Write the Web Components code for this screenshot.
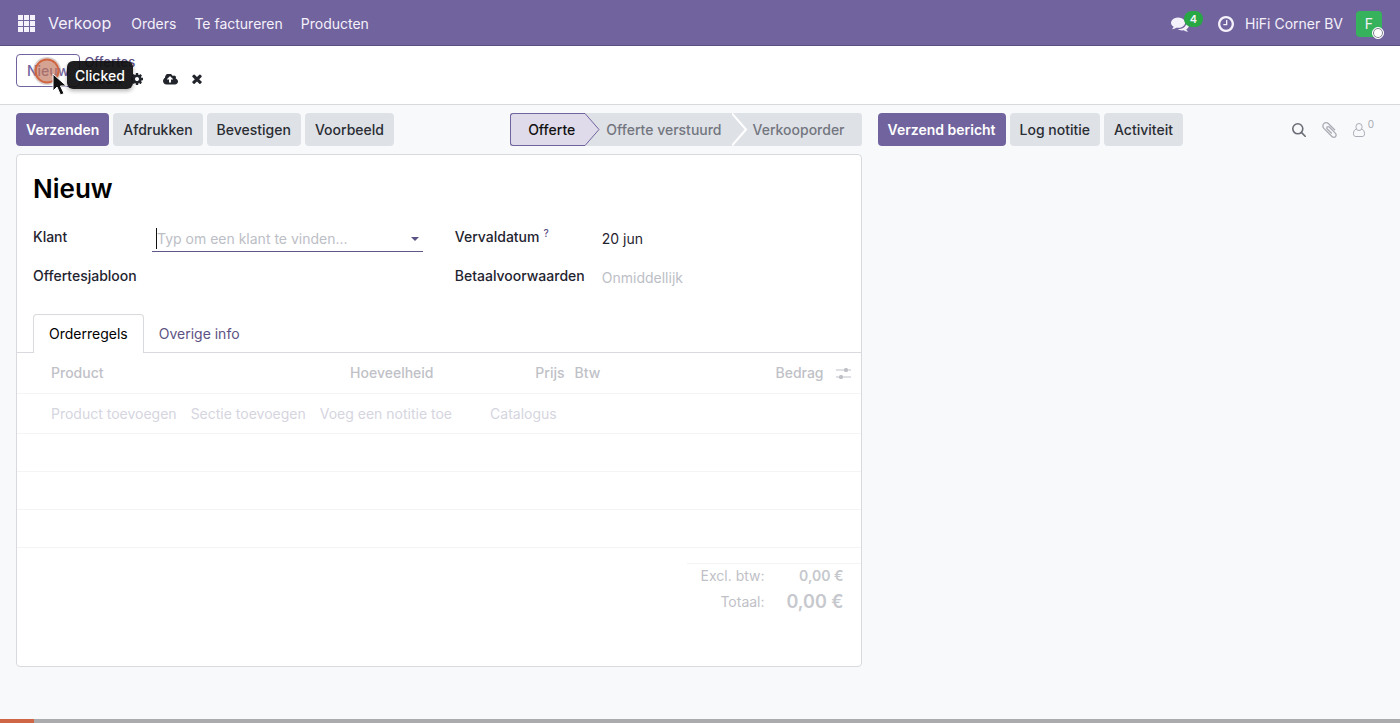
<!DOCTYPE html>
<html lang="nl">
<head>
<meta charset="utf-8">
<meta name="viewport" content="width=device-width, initial-scale=1">
<title>Verkoop - Nieuw</title>
<style>
  html, body { margin: 0; min-height: 100vh; }
  body {
    --brand: #71639e;
    --line: #d8dadd;
    --grey: #dee1e6;
    --muted: #b9bbc3;
    background: #f8f9fb;
    color: #1f2430;
    font: 14px/21px Inter, "Liberation Sans", sans-serif;
  }
</style>
</head>
<body>
<sales-app></sales-app>

<script>
const base = `
  *, *::before, *::after { box-sizing: border-box; }
  button, input { font: inherit; color: inherit; border: 0; background: none; padding: 0; margin: 0; }
  button { cursor: pointer; white-space: nowrap; }
  a { color: inherit; text-decoration: none; white-space: nowrap; }
  svg { display: block; }
`;

function define(name, html, setup) {
  const template = document.createElement('template');
  template.innerHTML = html.replace('<style>', '<style>' + base);
  customElements.define(name, class extends HTMLElement {
    constructor() {
      super();
      this.attachShadow({ mode: 'open' }).append(template.content.cloneNode(true));
    }
    connectedCallback() { if (setup) setup(this, this.shadowRoot); }
  });
}

const icons = {
  apps: ['0 0 17 17', '<path d="M0 0h5v5H0zM6 0h5v5H6zM12 0h5v5h-5zM0 6h5v5H0zM6 6h5v5H6zM12 6h5v5h-5zM0 12h5v5H0zM6 12h5v5H6zM12 12h5v5h-5z"/>'],
  comments: ['0 128 1792 1536', '<path d="M1408 768q0 139-94 257t-256.500 186.500-353.500 68.500q-86 0-176-16-124 88-278 128-36 9-86 16h-3q-11 0-20.500-8t-11.500-21q-1-3-1-6.500t.5-6.500 2-6l2.500-5 3.500-5.500 4-5 4.500-5 4-4.500q5-6 23-25t26-29.500 22.500-29 25-38.500 20.500-44q-124-72-195-177t-71-224q0-139 94-257t256.500-186.500 353.500-68.500 353.500 68.500 256.500 186.500 94 257zm384 256q0 120-71 224.500t-195 176.500q10 24 20.500 44t25 38.500 22.500 29 26 29.500 23 25q1 1 4 4.500t4.500 5 4 5 3.500 5.500l2.500 5 2 6 .5 6.500-1 6.500q-3 14-13 22t-22 7q-50-7-86-16-154-40-278-128-90 16-176 16-271 0-472-132 58 4 88 4 161 0 309-45t264-129q125-92 192-212t67-254q0-77-23-152 129 71 204 178t75 230z"/>'],
  clock: ['128 128 1536 1536', '<path d="M1024 544v448q0 14-9 23t-23 9h-320q-14 0-23-9t-9-23v-64q0-14 9-23t23-9h224v-352q0-14 9-23t23-9h64q14 0 23 9t9 23zm416 352q0-148-73-273t-198-198-273-73-273 73-198 198-73 273 73 273 198 198 273 73 273-73 198-198 73-273zm224 0q0 209-103 385.500t-279.500 279.500-385.500 103-385.500-103-279.500-279.500-103-385.500 103-385.500 279.500-279.500 385.500-103 385.500 103 279.500 279.500 103 385.500z"/>'],
  cog: ['128 128 1536 1536', '<path d="M1152 896q0-106-75-181t-181-75-181 75-75 181 75 181 181 75 181-75 75-181zm512-109v222q0 12-8 23t-20 13l-185 28q-19 54-39 91 35 50 107 138 10 12 10 25t-9 23q-27 37-99 108t-94 71q-12 0-26-9l-138-108q-44 23-91 38-16 136-29 186-7 28-36 28h-222q-14 0-24.500-8.500t-11.500-21.500l-28-184q-49-16-90-37l-141 107q-10 9-25 9-14 0-25-11-126-114-165-168-7-10-7-23 0-12 8-23 15-21 51-66.500t54-70.500q-27-50-41-99l-183-27q-13-2-21-12.500t-8-23.500v-222q0-12 8-23t19-13l186-28q14-46 39-92-40-57-107-138-10-12-10-24 0-10 9-23 26-36 98.500-107.500t94.500-71.500q13 0 26 10l138 107q44-23 91-38 16-136 29-186 7-28 36-28h222q14 0 24.500 8.500t11.500 21.500l28 184q49 16 90 37l142-107q9-9 24-9 13 0 25 10 129 119 165 170 7 8 7 22 0 12-8 23-15 21-51 66.500t-54 70.500q26 50 41 98l183 28q13 2 21 12.500t8 23.500z"/>'],
  cloud: ['-64 256 1920 1280', '<path d="M1216 864q0-14-9-23l-352-352q-9-9-23-9t-23 9l-351 351q-10 12-10 24 0 14 9 23t23 9h224v352q0 13 9.500 22.500t22.500 9.500h192q13 0 22.500-9.500t9.500-22.500v-352h224q13 0 22.500-9.500t9.500-22.500zm640 288q0 159-112.500 271.500t-271.500 112.500h-1088q-185 0-316.500-131.500t-131.500-316.500q0-130 70-240t188-165q-2-30-2-43 0-212 150-362t362-150q156 0 285.500 87t188.500 231q71-62 166-62 106 0 181 75t75 181q0 76-41 138 130 31 213.500 135.500t83.500 238.500z"/>'],
  close: ['302 302 1188 1252', '<path d="M1490 1322q0 40-28 68l-136 136q-28 28-68 28t-68-28l-294-294-294 294q-28 28-68 28t-68-28l-136-136q-28-28-28-68t28-68l294-294-294-294q-28-28-28-68t28-68l136-136q28-28 68-28t68 28l294 294 294-294q28-28 68-28t68 28l136 136q28 28 28 68t-28 68l-294 294 294 294q28 28 28 68z"/>'],
  clip: ['192 128 1408 1536', '<path d="M1596 1385q0 117-79 196t-196 79q-135 0-235-100l-777-776q-113-115-113-271 0-159 110-270t269-111q158 0 273 113l605 606q10 10 10 22 0 16-30.500 46.500t-46.500 30.500q-13 0-23-10l-606-607q-79-77-181-77-106 0-179 75t-73 181q0 105 76 181l776 777q63 63 145 63 64 0 106-42t42-106q0-82-63-145l-581-581q-26-24-60-24-29 0-48 19t-19 48q0 32 25 59l410 410q10 10 10 22 0 16-31 47t-47 31q-12 0-22-10l-410-410q-63-61-63-149 0-82 57-139t139-57q88 0 149 63l581 581q100 98 100 235z"/>'],
  search: ['0 0 14 14', '<g fill="none" stroke="currentColor" stroke-width="1.600" stroke-linecap="round"><circle cx="5.800" cy="5.800" r="5"/><path d="M9.600 9.600l3.600 3.600"/></g>'],
  user: ['0 0 12 14', '<g fill="none" stroke="currentColor"><rect x="3" y=".5" width="6" height="7" rx="3"/><path d="M3.300 6.200C1.500 6.600.5 8.200.5 10.800c0 1.800.9 2.700 2.300 2.700h6.400c1.400 0 2.300-.9 2.300-2.700 0-2.600-1-4.200-2.800-4.600"/></g>'],
  sliders: ['0 0 15 14', '<g><path d="M0 3.500h15v1H0zM0 10.500h15v1H0z"/><rect x="8" y="2" width="4" height="4" rx="1.500"/><rect x="3" y="9" width="4" height="4" rx="1.500"/></g>'],
  caret: ['0 0 8 4', '<path d="M0 0h8L4 4z"/>'],
};

define('ui-icon', `<style>
  :host { display: inline-block; flex: none; }
  svg { width: 100%; height: 100%; fill: currentColor; }
</style><svg aria-hidden="true"></svg>`, (el, root) => {
  const [box, shape] = icons[el.getAttribute('name')];
  const svg = root.querySelector('svg');
  svg.setAttribute('viewBox', box);
  svg.innerHTML = shape;
});

define('ui-button', `<style>
  :host { display: block; }
  button { height: 33px; padding: 0 10px; border-radius: 4px; background: var(--grey); color: #2a2d33; font-weight: 500; }
  :host([primary]) button { background: var(--brand); color: #fff; font-weight: 600; }
  :host([outline]) button { background: #fff; border: 1px solid var(--brand); color: var(--brand); }
</style><button type="button"><slot></slot></button>`);

define('sales-navbar', `<style>
  :host { display: block; }
  header { display: flex; align-items: center; justify-content: space-between; height: 46px; padding: 2px 18px 0; background: var(--brand); border-bottom: 1px solid #5a4f7f; color: #f4f1fa; }
  nav, .tray { display: flex; align-items: center; }
  nav { gap: 18px; }
  .app { font-size: 16px; margin: 0 2px 0 -5px; }
  .apps ui-icon { display: block; width: 17px; height: 17px; }
  .chat { position: relative; margin-right: 29px; }
  .chat ui-icon { width: 18px; height: 16px; display: block; }
  .badge { position: absolute; left: 13px; top: -5px; min-width: 19px; height: 16px; border-radius: 8px; background: #28a745; font-size: 11px; line-height: 16px; font-weight: 600; text-align: center; }
  .clock { margin-right: 11px; }
  .clock ui-icon { width: 16px; height: 16px; display: block; }
  .avatar { position: relative; width: 26px; height: 26px; margin-left: 13px; border-radius: 4px; background: #35b25b; text-align: center; line-height: 26px; }
  .avatar::after { content: ""; position: absolute; right: -2px; bottom: -2px; width: 12px; height: 12px; border-radius: 50%; border: 1px solid #fff; background: #fff; box-shadow: inset 0 0 0 1px #6d7080; }
</style>
<header>
  <nav aria-label="Hoofdmenu">
    <button class="apps" type="button" aria-label="Apps"><ui-icon name="apps"></ui-icon></button>
    <a class="app" href="#verkoop">Verkoop</a>
    <a href="#orders">Orders</a>
    <a href="#factureren">Te factureren</a>
    <a href="#producten">Producten</a>
  </nav>
  <div class="tray">
    <button class="chat" type="button" aria-label="Berichten"><ui-icon name="comments"></ui-icon><span class="badge">4</span></button>
    <button class="clock" type="button" aria-label="Activiteiten"><ui-icon name="clock"></ui-icon></button>
    <span>HiFi Corner BV</span>
    <button class="avatar" type="button">F</button>
  </div>
</header>`);

define('click-marker', `<style>
  :host { position: absolute; left: 33px; top: 10px; display: block; pointer-events: none; }
  .ring { width: 28px; height: 30px; }
  .arrow { position: absolute; left: 19px; top: 17px; width: 16px; height: 24px; }
  .tip { position: absolute; left: 34px; top: 5px; height: 28px; padding: 0 8px; border-radius: 6px; background: rgba(16, 16, 18, .94); color: #fff; line-height: 30px; font-weight: 500; box-shadow: 0 2px 4px rgba(0, 0, 0, .3); white-space: nowrap; }
</style>
<svg class="ring" viewBox="0 0 28 30"><circle cx="14" cy="15" r="14" fill="#a08c8c" fill-opacity=".4"/><circle cx="14" cy="15" r="11.500" fill="#d06a45" fill-opacity=".45" stroke="#d0653f" stroke-width="2"/></svg>
<div class="tip"><slot></slot></div>
<svg class="arrow" viewBox="0 0 16 24"><path d="M1 1v17l4-4 3.500 8 3.500-1.500-3.500-7.500h6z" fill="#111" stroke="#fff"/></svg>`);

define('control-panel', `<style>
  :host { display: block; }
  section { position: relative; display: flex; align-items: flex-start; gap: 4px; min-height: 59px; padding: 8px 16px; background: #fff; border-bottom: 1px solid var(--line); color: #22252b; }
  .crumbs { display: flex; flex-direction: column; line-height: 17px; }
  .crumbs > a { color: #5d5284; font-weight: 500; font-size: 13px; }
  .row { display: flex; align-items: center; height: 16px; font-size: 13px; }
  .row span { width: 47px; }
  .row button { display: block; }
  ui-icon { display: block; }
  .cog { width: 12px; height: 12px; }
  .cloud { width: 15px; height: 11px; margin-left: 20px; }
  .close { width: 10px; height: 10px; margin-left: 14px; }
</style>
<section>
  <ui-button outline>Nieuw</ui-button>
  <div class="crumbs">
    <a href="#offertes">Offertes</a>
    <div class="row"><span>Nieuw</span>
      <button type="button" aria-label="Acties"><ui-icon class="cog" name="cog"></ui-icon></button>
      <button type="button" aria-label="Opslaan"><ui-icon class="cloud" name="cloud"></ui-icon></button>
      <button type="button" aria-label="Annuleren"><ui-icon class="close" name="close"></ui-icon></button>
    </div>
  </div>
  <click-marker>Clicked</click-marker>
</section>`);

define('status-step', `<style>
  :host { display: block; position: relative; }
  button { height: 33px; padding: 0 10px 0 21px; background: var(--grey); color: #73767f; font-weight: 500; }
  svg { display: none; position: absolute; left: 100%; top: 0; width: 15px; height: 33px; z-index: 1; fill: var(--grey); stroke: #fff; stroke-width: 2; }
  :host([arrow]) svg { display: block; }
  :host([current]) button { padding-left: 17px; background: #dfdbea; color: #111; border: 1px solid var(--brand); border-right: 0; border-radius: 3px 0 0 3px; }
  :host([current]) svg { fill: #dfdbea; stroke: var(--brand); stroke-width: 1; }
  :host([last]) button { padding-right: 17px; border-radius: 0 3px 3px 0; }
</style><button type="button"><slot></slot></button>
<svg viewBox="0 0 15 33"><path d="M-1 .5H0L14 16.500L0 32.500H-1" /></svg>`);

define('form-field', `<style>
  :host { display: grid; grid-template-columns: var(--label, 119px) minmax(0, 1fr); align-items: start; min-height: 39px; }
  label { font-weight: 500; line-height: 21px; padding-top: 2px; white-space: nowrap; }
  sup { font-size: 10px; line-height: 0; color: #5d5284; margin-left: 4px; vertical-align: 5px; }
  .box { display: flex; align-items: center; height: 28px; padding: 2px 4px 0; border-bottom: 1px solid transparent; }
  input { width: 100%; min-width: 0; height: 21px; outline: 0; }
  input::placeholder { color: #bcbec6; opacity: 1; }
  ui-icon { display: none; width: 8px; height: 4px; color: #5d5284; }
  :host([open]) .box { border-color: #5f5788; }
  :host([open]) ui-icon { display: block; }
  :host([open]) input { border-left: 1px solid #111; }
</style>
<label for="f"><span></span></label>
<div class="box"><input id="f" autocomplete="off"><ui-icon name="caret"></ui-icon></div>`, (el, root) => {
  root.querySelector('span').textContent = el.getAttribute('label');
  const input = root.querySelector('input');
  input.value = el.getAttribute('value') || '';
  input.placeholder = el.getAttribute('hint') || '';
  if (el.hasAttribute('help') && !root.querySelector('sup')) {
    const sup = document.createElement('sup');
    sup.textContent = '?';
    root.querySelector('label').append(sup);
  }
});

define('order-lines', `<style>
  :host { display: block; color: #bfc1c7; }
  table { width: 100%; border-collapse: collapse; table-layout: fixed; }
  th, td { height: 38px; padding: 0 5px; border-bottom: 1px solid #f3f4f5; text-align: left; font-weight: 500; }
  thead th, .add td { height: 40px; }
  th.num { text-align: right; }
  .handle { width: 29px; }
  .product { width: 31%; }
  .qty, .price { width: 131px; }
  .opt { width: 32px; padding: 0 10px 0 7px; }
  .opt ui-icon { display: block; width: 15px; height: 14px; }
  .links { display: flex; gap: 14px; color: #d5d5e0; font-weight: 400; }
  .links a:last-child { margin-left: 24px; }
  .totals { width: 174px; margin: 15px 0 0 auto; border-top: 1px solid #f3f4f5; }
  .totals th, .totals td { height: 26px; padding: 0 0 2px; border: 0; text-align: right; white-space: nowrap; }
  .totals th { width: 78px; font-weight: 400; }
  .totals td { font-weight: 600; padding-right: 17px; color: #c6c8cd; }
  .totals .grand { font-size: 18px; }
</style>
<table>
  <thead><tr>
    <th class="handle"></th><th class="product">Product</th><th class="num qty">Hoeveelheid</th><th class="num price">Prijs</th>
    <th>Btw</th><th class="num">Bedrag</th><th class="opt"><ui-icon name="sliders"></ui-icon></th>
  </tr></thead>
  <tbody>
    <tr class="add"><td></td><td colspan="6"><div class="links">
      <a href="#product">Product toevoegen</a><a href="#sectie">Sectie toevoegen</a><a href="#notitie">Voeg een notitie toe</a><a href="#catalogus">Catalogus</a>
    </div></td></tr>
    <tr><td colspan="7"></td></tr>
    <tr><td colspan="7"></td></tr>
    <tr><td colspan="7"></td></tr>
  </tbody>
</table>
<table class="totals">
  <tr><th>Excl. btw:</th><td>0,00 €</td></tr>
  <tr><th>Totaal:</th><td class="grand">0,00 €</td></tr>
</table>`);

define('order-sheet', `<style>
  :host { display: block; background: #fff; border: 1px solid var(--line); border-radius: 4px; padding-bottom: 51px; }
  h1 { margin: 0; padding: 16px 16px 0; font-size: 26px; line-height: 36px; font-weight: 600; color: #000; }
  .fields { display: grid; grid-template-columns: repeat(2, minmax(0, 1fr)); column-gap: 32px; padding: 17px 16px 0; }
  .right { --label: 143px; }
  .tabs { display: flex; padding: 12px 16px 0; border-bottom: 1px solid var(--line); }
  .tabs button { height: 38px; padding: 0 15px; color: #5d5284; }
  .tabs button.on { height: 39px; margin-bottom: -1px; padding-bottom: 2px; color: #000; background: #fff; border: 1px solid var(--line); border-bottom: 0; border-radius: 4px 4px 0 0; }
</style>
<h1>Nieuw</h1>
<div class="fields">
  <form-field label="Klant" hint="Typ om een klant te vinden..." open></form-field>
  <form-field class="right" label="Vervaldatum" value="20 jun" help></form-field>
  <form-field label="Offertesjabloon"></form-field>
  <form-field class="right" label="Betaalvoorwaarden" hint="Onmiddellijk"></form-field>
</div>
<div class="tabs" role="tablist">
  <button class="on" type="button" role="tab" aria-selected="true">Orderregels</button>
  <button type="button" role="tab" aria-selected="false">Overige info</button>
</div>
<slot></slot>`);

define('chatter-bar', `<style>
  :host { display: flex; justify-content: space-between; align-items: center; padding-right: 10px; }
  .group { display: flex; gap: 4px; }
  .tools { display: flex; gap: 16px; align-items: center; color: #a9acb4; padding-right: 16px; }
  .tools button { display: flex; gap: 3px; }
  ui-icon { width: 14px; height: 14px; }
  .find { color: #6a6d76; }
  .tools .small { font-size: 10px; line-height: 10px; margin-top: -4px; }
  .clip { width: 15px; height: 16px; }
  .user { width: 12px; height: 14px; }
</style>
<div class="group">
  <ui-button primary>Verzend bericht</ui-button><ui-button>Log notitie</ui-button><ui-button>Activiteit</ui-button>
</div>
<div class="tools">
  <button class="find" type="button" aria-label="Zoeken"><ui-icon name="search"></ui-icon></button>
  <button type="button" aria-label="Bijlagen"><ui-icon class="clip" name="clip"></ui-icon></button>
  <button type="button" aria-label="Volgers"><ui-icon class="user" name="user"></ui-icon><span class="small">0</span></button>
</div>`);

define('playback-bar', `<style>
  :host { position: fixed; left: 0; right: 0; bottom: 0; display: block; height: 4px; background: #ababad; }
  div { width: 34px; height: 4px; background: #cf6746; }
</style><div></div>`);

define('sales-app', `<style>
  :host { display: block; }
  main { display: grid; grid-template-columns: minmax(0, 8fr) minmax(0, 5fr); align-items: start; padding: 8px 0 16px; }
  .form { padding-left: 16px; }
  .bar { display: flex; justify-content: space-between; margin-bottom: 8px; }
  .group, .status { display: flex; }
  .group { gap: 4px; }
  chatter-bar { margin-left: 16px; }
</style>
<sales-navbar></sales-navbar>
<control-panel></control-panel>
<main>
  <div class="form">
    <div class="bar">
      <div class="group">
        <ui-button primary>Verzenden</ui-button><ui-button>Afdrukken</ui-button><ui-button>Bevestigen</ui-button><ui-button>Voorbeeld</ui-button>
      </div>
      <div class="status">
        <status-step current arrow>Offerte</status-step><status-step arrow>Offerte verstuurd</status-step><status-step last>Verkooporder</status-step>
      </div>
    </div>
    <order-sheet><order-lines></order-lines></order-sheet>
  </div>
  <chatter-bar></chatter-bar>
</main>
<playback-bar></playback-bar>`);
</script>
</body>
</html>
